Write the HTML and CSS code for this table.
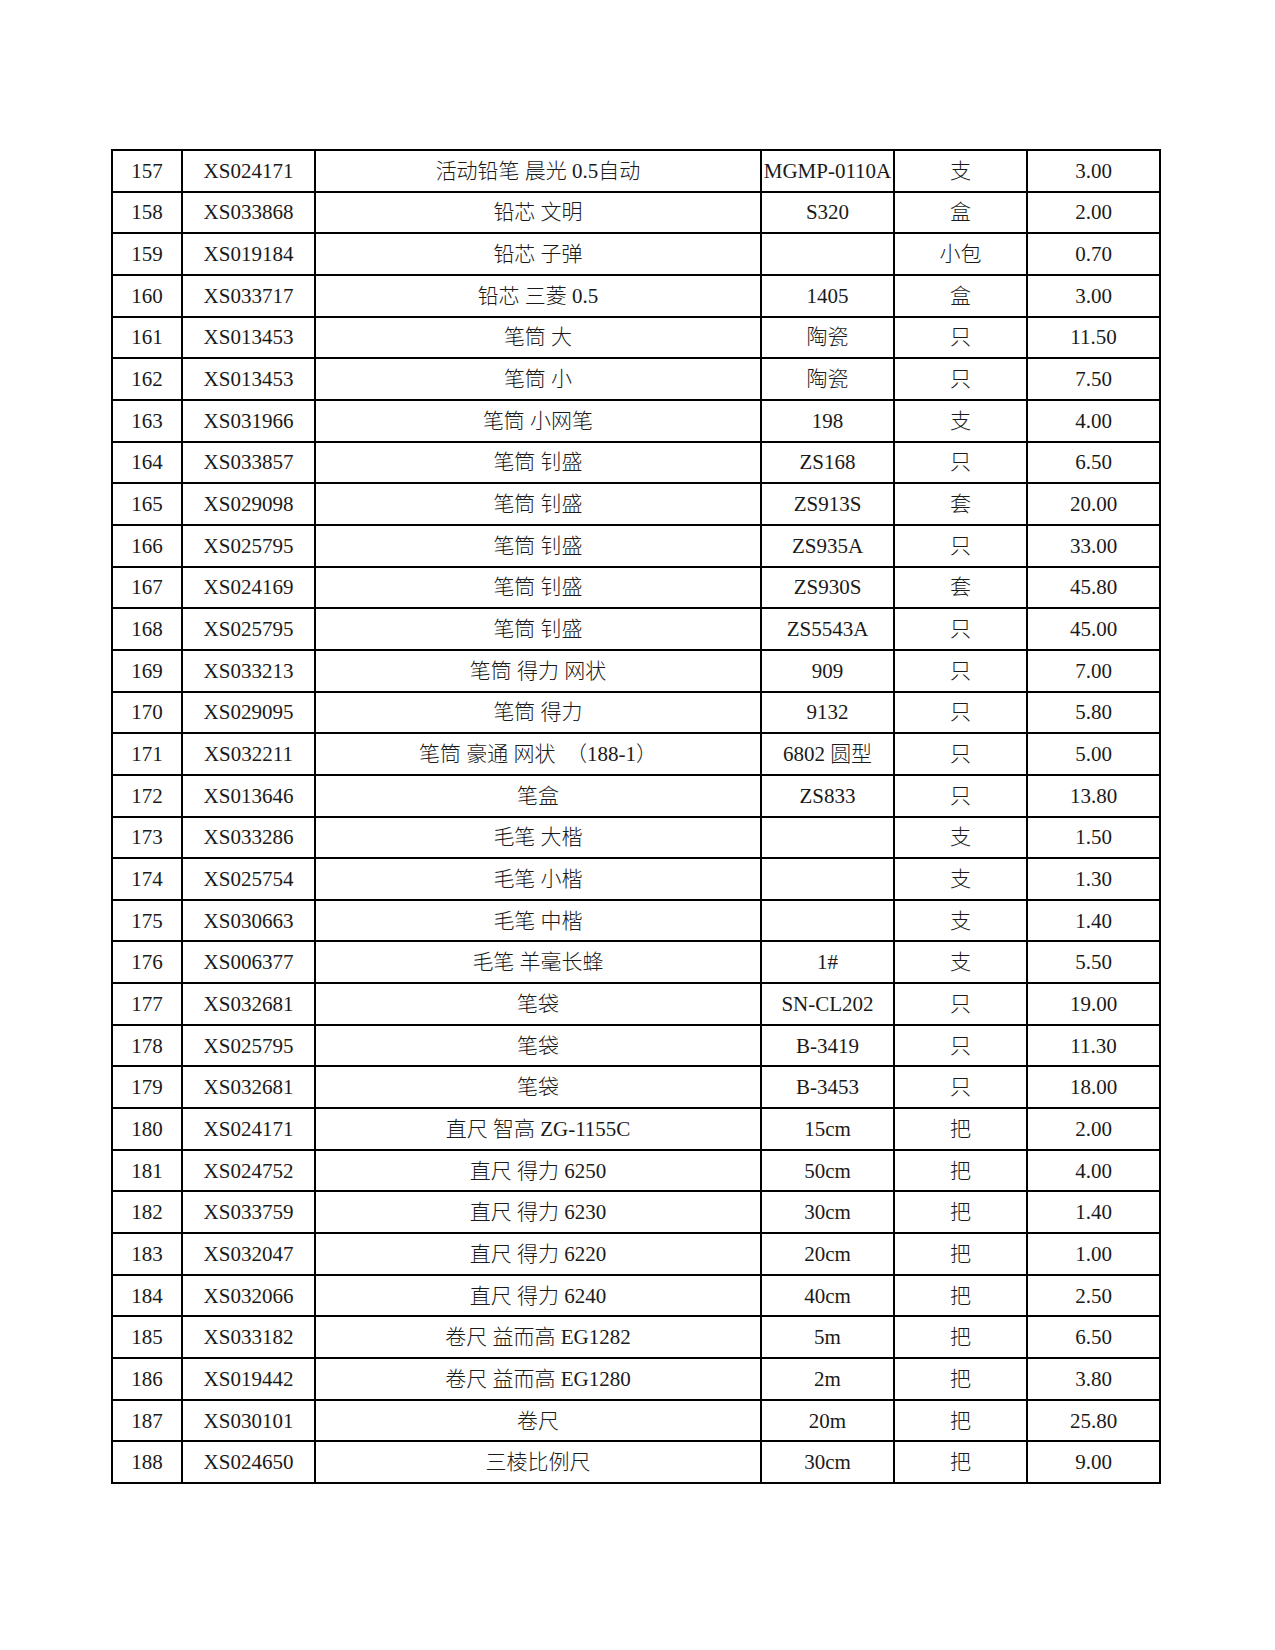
FILE: index.html
```html
<!DOCTYPE html>
<html lang="zh">
<head>
<meta charset="utf-8">
<title>表格</title>
<link rel="stylesheet" href="styles.css">
</head>
<body>
<div class="page">
<div class="sheet">
<div class="c">157</div><div class="c">XS024171</div><div class="c">活动铅笔 晨光 0.5自动</div><div class="c">MGMP-0110A</div><div class="c">支</div><div class="c">3.00</div>
<div class="c">158</div><div class="c">XS033868</div><div class="c">铅芯 文明</div><div class="c">S320</div><div class="c">盒</div><div class="c">2.00</div>
<div class="c">159</div><div class="c">XS019184</div><div class="c">铅芯 子弹</div><div class="c"></div><div class="c">小包</div><div class="c">0.70</div>
<div class="c">160</div><div class="c">XS033717</div><div class="c">铅芯 三菱 0.5</div><div class="c">1405</div><div class="c">盒</div><div class="c">3.00</div>
<div class="c">161</div><div class="c">XS013453</div><div class="c">笔筒 大</div><div class="c">陶瓷</div><div class="c">只</div><div class="c">11.50</div>
<div class="c">162</div><div class="c">XS013453</div><div class="c">笔筒 小</div><div class="c">陶瓷</div><div class="c">只</div><div class="c">7.50</div>
<div class="c">163</div><div class="c">XS031966</div><div class="c">笔筒 小网笔</div><div class="c">198</div><div class="c">支</div><div class="c">4.00</div>
<div class="c">164</div><div class="c">XS033857</div><div class="c">笔筒 钊盛</div><div class="c">ZS168</div><div class="c">只</div><div class="c">6.50</div>
<div class="c">165</div><div class="c">XS029098</div><div class="c">笔筒 钊盛</div><div class="c">ZS913S</div><div class="c">套</div><div class="c">20.00</div>
<div class="c">166</div><div class="c">XS025795</div><div class="c">笔筒 钊盛</div><div class="c">ZS935A</div><div class="c">只</div><div class="c">33.00</div>
<div class="c">167</div><div class="c">XS024169</div><div class="c">笔筒 钊盛</div><div class="c">ZS930S</div><div class="c">套</div><div class="c">45.80</div>
<div class="c">168</div><div class="c">XS025795</div><div class="c">笔筒 钊盛</div><div class="c">ZS5543A</div><div class="c">只</div><div class="c">45.00</div>
<div class="c">169</div><div class="c">XS033213</div><div class="c">笔筒 得力 网状</div><div class="c">909</div><div class="c">只</div><div class="c">7.00</div>
<div class="c">170</div><div class="c">XS029095</div><div class="c">笔筒 得力</div><div class="c">9132</div><div class="c">只</div><div class="c">5.80</div>
<div class="c">171</div><div class="c">XS032211</div><div class="c">笔筒 豪通 网状  （188-1）</div><div class="c">6802 圆型</div><div class="c">只</div><div class="c">5.00</div>
<div class="c">172</div><div class="c">XS013646</div><div class="c">笔盒</div><div class="c">ZS833</div><div class="c">只</div><div class="c">13.80</div>
<div class="c">173</div><div class="c">XS033286</div><div class="c">毛笔 大楷</div><div class="c"></div><div class="c">支</div><div class="c">1.50</div>
<div class="c">174</div><div class="c">XS025754</div><div class="c">毛笔 小楷</div><div class="c"></div><div class="c">支</div><div class="c">1.30</div>
<div class="c">175</div><div class="c">XS030663</div><div class="c">毛笔 中楷</div><div class="c"></div><div class="c">支</div><div class="c">1.40</div>
<div class="c">176</div><div class="c">XS006377</div><div class="c">毛笔 羊毫长蜂</div><div class="c">1#</div><div class="c">支</div><div class="c">5.50</div>
<div class="c">177</div><div class="c">XS032681</div><div class="c">笔袋</div><div class="c">SN-CL202</div><div class="c">只</div><div class="c">19.00</div>
<div class="c">178</div><div class="c">XS025795</div><div class="c">笔袋</div><div class="c">B-3419</div><div class="c">只</div><div class="c">11.30</div>
<div class="c">179</div><div class="c">XS032681</div><div class="c">笔袋</div><div class="c">B-3453</div><div class="c">只</div><div class="c">18.00</div>
<div class="c">180</div><div class="c">XS024171</div><div class="c">直尺 智高 ZG-1155C</div><div class="c">15cm</div><div class="c">把</div><div class="c">2.00</div>
<div class="c">181</div><div class="c">XS024752</div><div class="c">直尺 得力 6250</div><div class="c">50cm</div><div class="c">把</div><div class="c">4.00</div>
<div class="c">182</div><div class="c">XS033759</div><div class="c">直尺 得力 6230</div><div class="c">30cm</div><div class="c">把</div><div class="c">1.40</div>
<div class="c">183</div><div class="c">XS032047</div><div class="c">直尺 得力 6220</div><div class="c">20cm</div><div class="c">把</div><div class="c">1.00</div>
<div class="c">184</div><div class="c">XS032066</div><div class="c">直尺 得力 6240</div><div class="c">40cm</div><div class="c">把</div><div class="c">2.50</div>
<div class="c">185</div><div class="c">XS033182</div><div class="c">卷尺 益而高 EG1282</div><div class="c">5m</div><div class="c">把</div><div class="c">6.50</div>
<div class="c">186</div><div class="c">XS019442</div><div class="c">卷尺 益而高 EG1280</div><div class="c">2m</div><div class="c">把</div><div class="c">3.80</div>
<div class="c">187</div><div class="c">XS030101</div><div class="c">卷尺</div><div class="c">20m</div><div class="c">把</div><div class="c">25.80</div>
<div class="c">188</div><div class="c">XS024650</div><div class="c">三棱比例尺</div><div class="c">30cm</div><div class="c">把</div><div class="c">9.00</div>
</div>
</div>
</body>
</html>
```
FILE: styles.css
```css
html, body {
  margin: 0;
  padding: 0;
  background: #ffffff;
}
.page {
  width: 1275px;
  height: 1650px;
  padding: 149px 0 0 111px;
  box-sizing: border-box;
}
.sheet {
  display: grid;
  grid-template-columns: 70px 133px 446px 133px 133px 133px;
  grid-auto-rows: 41.66px;
  width: 1050px;
  box-sizing: border-box;
  border-left: 2px solid #000;
  border-top: 2px solid #000;
  font-family: "Liberation Serif", "Noto Sans CJK SC", serif;
  font-size: 21px;
  font-weight: 300;
  color: #1a1a1a;
}
.c {
  box-sizing: border-box;
  border-right: 2px solid #000;
  border-bottom: 2px solid #000;
  display: flex;
  align-items: center;
  justify-content: center;
  white-space: pre;
  line-height: 1;
  padding-top: 1px;
}
```
